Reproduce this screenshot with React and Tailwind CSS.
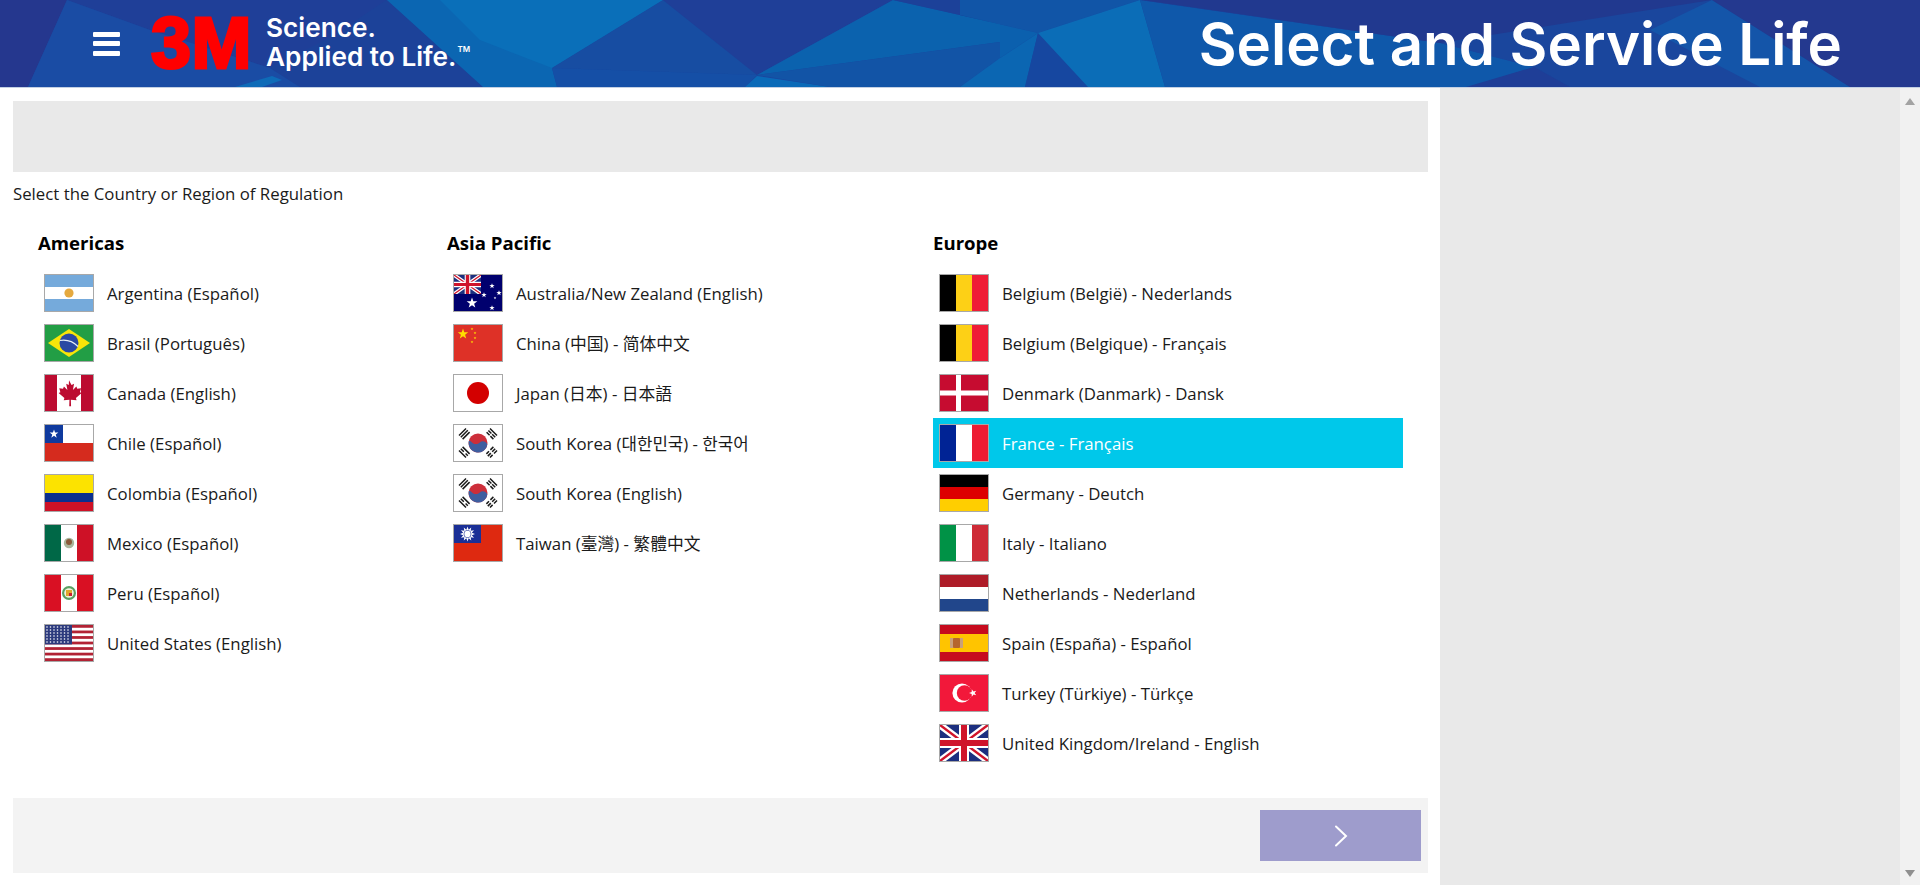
import React from "react";

const BODY_FONT = "font-['Open_Sans','Noto_Sans_CJK_SC','Noto_Sans_CJK_KR',sans-serif]";

// points for a star with n tips
const star = (cx, cy, r, n = 5, inner = 0.4) => {
  const pts = [];
  for (let i = 0; i < n * 2; i++) {
    const rad = i % 2 === 0 ? r : r * inner;
    const a = -Math.PI / 2 + (i * Math.PI) / n;
    pts.push(`${(cx + rad * Math.cos(a)).toFixed(2)},${(cy + rad * Math.sin(a)).toFixed(2)}`);
  }
  return pts.join(" ");
};

const VBands = ({ c }) => (
  <>
    <rect x="0" width="16" height="36" fill={c[0]} />
    <rect x="16" width="16" height="36" fill={c[1]} />
    <rect x="32" width="16" height="36" fill={c[2]} />
  </>
);

const HBands = ({ c }) => (
  <>
    <rect y="0" width="48" height="12" fill={c[0]} />
    <rect y="12" width="48" height="12" fill={c[1]} />
    <rect y="24" width="48" height="12" fill={c[2]} />
  </>
);

const Korea = () => (
  <>
    <rect width="48" height="36" fill="#fff" />
    <circle cx="24" cy="18" r="9.5" fill="#cd2e3a" />
    <path d="M14.6 16.6a9.5 9.5 0 0 0 18.8 2.8c-1.6-3.4-5.4-4-7.6-1.9-2.4 2.3-6 1.9-7.6.2-1.3-1.3-2.6-2.2-3.6-1.1z" fill="#3e5ea0" />
    <g stroke="#1a1a1a" strokeWidth="1.5">
      <path d="M5 10.5l7-7M6.8 12.3l7-7M8.6 14.1l7-7" />
      <path d="M43 10.5l-7-7M41.2 12.3l-3-3M37.4 8.5l-3-3M39.4 14.1l-3-3M35.6 10.3l-3-3" />
      <path d="M5 25.5l7 7M6.8 23.7l3 3M11.6 28.5l2.2 2.2M8.6 21.9l7 7" />
      <path d="M43 25.5l-3 3M38.6 29.9l-2.6 2.6M41.2 23.7l-3 3M36.8 28.1l-3 3M39.4 21.9l-3 3M35 26.3l-2.6 2.6" />
    </g>
  </>
);

const UnionJack = ({ w = 48, h = 36 }) => (
  <svg x="0" y="0" width={w} height={h} viewBox="0 0 48 36" preserveAspectRatio="none">
    <rect width="48" height="36" fill="#1c2f7f" />
    <path d="M0 0L48 36M48 0L0 36" stroke="#fff" strokeWidth="7" />
    <path d="M0 0L48 36M48 0L0 36" stroke="#cf142b" strokeWidth="2.4" />
    <path d="M24 0V36M0 18H48" stroke="#fff" strokeWidth="10" />
    <path d="M24 0V36M0 18H48" stroke="#cf142b" strokeWidth="6" />
  </svg>
);

const flags = {
  ar: (
    <>
      <HBands c={["#75aadb", "#fff", "#75aadb"]} />
      <circle cx="24" cy="18" r="4.6" fill="#e5a93f" />
    </>
  ),
  br: (
    <>
      <rect width="48" height="36" fill="#229e45" />
      <polygon points="24,4 45,18 24,32 3,18" fill="#f8e509" />
      <circle cx="24" cy="18" r="9.5" fill="#2b49a3" />
      <path d="M15 15.5c6-1 13 1 18 6" stroke="#e8eef5" strokeWidth="1.2" fill="none" />
    </>
  ),
  ca: (
    <>
      <rect width="48" height="36" fill="#fff" />
      <rect width="12" height="36" fill="#bc0b30" />
      <rect x="36" width="12" height="36" fill="#bc0b30" />
      <path
        transform="translate(24 18) scale(1.15) translate(-24 -18)"
        d="M24 7l2.2 4 2.2-1-1 5.4 3-3 .8 1.900 3.300-.5-1 3.500 1.500.8-5 4.300.6 2-5-.6.2 5.700h-1.600l.2-5.700-5 .6.600-2-5-4.300 1.500-.8-1-3.500 3.300.5.800-1.900 3 3-1-5.400 2.200 1z"
        fill="#bc0b30"
      />
    </>
  ),
  cl: (
    <>
      <rect width="48" height="18" fill="#fff" />
      <rect y="18" width="48" height="18" fill="#d52b1e" />
      <rect width="18" height="18" fill="#0f3a9e" />
      <polygon points={star(9, 9, 4.6)} fill="#fff" />
    </>
  ),
  co: (
    <>
      <rect width="48" height="18" fill="#fce300" />
      <rect y="18" width="48" height="9" fill="#0a2f8f" />
      <rect y="27" width="48" height="9" fill="#ce1126" />
    </>
  ),
  mx: (
    <>
      <VBands c={["#006847", "#fff", "#ce1126"]} />
      <circle cx="24" cy="18" r="5.2" fill="#a9b59c" />
      <circle cx="24" cy="17" r="3" fill="#8a5a3a" />
    </>
  ),
  pe: (
    <>
      <VBands c={["#d91023", "#fff", "#d91023"]} />
      <circle cx="24" cy="18" r="7" fill="#5aa062" />
      <circle cx="24" cy="18" r="4.8" fill="#f4f1dc" />
      <rect x="21" y="15" width="6" height="6" fill="#e0a82e" />
      <rect x="24" y="18" width="3" height="3" fill="#c8202f" />
    </>
  ),
  us: (
    <>
      <rect width="48" height="36" fill="#fff" />
      {[0, 2, 4, 6, 8, 10, 12].map((i) => (
        <rect key={i} y={(i * 36) / 13} width="48" height={36 / 13} fill="#b22234" />
      ))}
      <rect width="27" height="19.4" fill="#2c3a7d" />
      {[2, 5, 8, 11, 14, 17].map((y) =>
        [2, 5.5, 9, 12.5, 16, 19.5, 23].map((x) => (
          <circle key={`${x}-${y}`} cx={x} cy={y} r="0.8" fill="#fff" />
        ))
      )}
    </>
  ),
  au: (
    <>
      <rect width="48" height="36" fill="#00006e" />
      <UnionJack w={27} h={19} />
      <polygon points={star(18, 28, 5.6)} fill="#fff" />
      <polygon points={star(38, 11, 2.8)} fill="#fff" />
      <polygon points={star(30, 20, 2.8)} fill="#fff" />
      <polygon points={star(45, 18, 2.8)} fill="#fff" />
      <polygon points={star(38, 33, 2.8)} fill="#fff" />
      <polygon points={star(41, 23, 1.4)} fill="#fff" />
    </>
  ),
  cn: (
    <>
      <rect width="48" height="36" fill="#de3127" />
      <polygon points={star(9, 9, 5.5)} fill="#ffde00" />
      <polygon points={star(18, 4, 1.5)} fill="#ffde00" />
      <polygon points={star(21, 8, 1.5)} fill="#ffde00" />
      <polygon points={star(21, 13, 1.5)} fill="#ffde00" />
      <polygon points={star(18, 17, 1.5)} fill="#ffde00" />
    </>
  ),
  jp: (
    <>
      <rect width="48" height="36" fill="#fff" />
      <circle cx="24" cy="18" r="11" fill="#d30000" />
    </>
  ),
  kr: <Korea />,
  tw: (
    <>
      <rect width="48" height="36" fill="#de2910" />
      <rect width="27" height="18" fill="#1a2f96" />
      <polygon points={star(13.5, 9, 7.5, 12, 0.6)} fill="#fff" />
      <circle cx="13.5" cy="9" r="3.8" fill="#1a2f96" />
      <circle cx="13.5" cy="9" r="3.2" fill="#fff" />
    </>
  ),
  be: <VBands c={["#000", "#fdd016", "#ef1c36"]} />,
  dk: (
    <>
      <rect width="48" height="36" fill="#c60c30" />
      <rect x="16" width="5" height="36" fill="#fff" />
      <rect y="15.5" width="48" height="5" fill="#fff" />
    </>
  ),
  fr: <VBands c={["#002395", "#fff", "#ed1c33"]} />,
  de: <HBands c={["#000", "#dd0000", "#ffce00"]} />,
  it: <VBands c={["#009246", "#fff", "#ce2b37"]} />,
  nl: <HBands c={["#ae1c28", "#fff", "#21468b"]} />,
  es: (
    <>
      <rect width="48" height="36" fill="#c60b1e" />
      <rect y="9" width="48" height="18" fill="#ffc400" />
      <rect x="10" y="13" width="3" height="10" fill="#c9a07a" />
      <rect x="20" y="13" width="3" height="10" fill="#c9a07a" />
      <rect x="13" y="13" width="7" height="10" rx="1" fill="#b5652e" />
    </>
  ),
  tr: (
    <>
      <rect width="48" height="36" fill="#f2183a" />
      <circle cx="22" cy="18" r="9.6" fill="#fff" />
      <circle cx="24.5" cy="18" r="7.7" fill="#f2183a" />
      <polygon points={star(33, 18, 4)} fill="#fff" transform="rotate(-90 33 18)" />
    </>
  ),
  uk: <UnionJack />,
};

const Flag = ({ code }) => (
  <svg
    viewBox="0 0 48 36"
    preserveAspectRatio="none"
    className="w-[50px] h-[38px] shrink-0 border border-[#a8a8a8]"
  >
    {flags[code]}
  </svg>
);

const regions = [
  {
    name: "Americas",
    items: [
      ["ar", "Argentina (Español)"],
      ["br", "Brasil (Português)"],
      ["ca", "Canada (English)"],
      ["cl", "Chile (Español)"],
      ["co", "Colombia (Español)"],
      ["mx", "Mexico (Español)"],
      ["pe", "Peru (Español)"],
      ["us", "United States (English)"],
    ],
  },
  {
    name: "Asia Pacific",
    items: [
      ["au", "Australia/New Zealand (English)"],
      ["cn", "China (中国) - 简体中文"],
      ["jp", "Japan (日本) - 日本語"],
      ["kr", "South Korea (대한민국) - 한국어"],
      ["kr", "South Korea (English)"],
      ["tw", "Taiwan (臺灣) - 繁體中文"],
    ],
  },
  {
    name: "Europe",
    items: [
      ["be", "Belgium (België) - Nederlands"],
      ["be", "Belgium (Belgique) - Français"],
      ["dk", "Denmark (Danmark) - Dansk"],
      ["fr", "France - Français", true],
      ["de", "Germany - Deutch"],
      ["it", "Italy - Italiano"],
      ["nl", "Netherlands - Nederland"],
      ["es", "Spain (España) - Español"],
      ["tr", "Turkey (Türkiye) - Türkçe"],
      ["uk", "United Kingdom/Ireland - English"],
    ],
  },
];

// faceted blue backdrop of the banner
const HeaderArt = () => (
  <svg className="absolute inset-0 w-full h-full" viewBox="0 0 1920 87" preserveAspectRatio="none">
    <rect width="1920" height="87" fill="#1a479f" />
    <polygon points="0,0 67,0 28,87 0,87" fill="#25378e" />
    <polygon points="67,0 387,0 330,38 270,68 150,30" fill="#1f3f98" />
    <polygon points="67,0 150,30 270,68 300,87 28,87" fill="#1a4ca4" />
    <polygon points="235,87 272,76 282,80 262,87" fill="#0e6bb8" />
    <polygon points="270,68 330,38 387,0 483,87 300,87" fill="#1c4299" />
    <polygon points="387,0 663,0 552,68 557,87 483,87" fill="#0b66b2" />
    <polygon points="440,0 663,0 552,68 480,40" fill="#0a6fb9" />
    <polygon points="663,0 552,68 757,75" fill="#174da2" />
    <polygon points="663,0 893,0 757,75" fill="#1f3f98" />
    <polygon points="552,68 757,75 745,87 557,87" fill="#154fa6" />
    <polygon points="757,76 830,87 745,87" fill="#0a6ab8" />
    <polygon points="893,0 1000,24 1000,42 757,75" fill="#0b62ae" />
    <polygon points="757,75 1000,42 1000,58 960,87 830,87" fill="#1254a6" />
    <polygon points="1000,58 1038,33 1025,87 960,87" fill="#0b66b2" />
    <polygon points="893,0 1000,0 1000,24" fill="#1c4199" />
    <polygon points="960,0 1140,0 1038,33 960,15" fill="#1155a7" />
    <polygon points="960,15 1038,33 1000,58 1000,24" fill="#0b60ae" />
    <polygon points="1038,33 1088,87 1025,87" fill="#1647a0" />
    <polygon points="1038,33 1140,0 1165,87 1088,87" fill="#0b6db7" />
    <polygon points="1140,0 1440,43 1534,67 1470,87 1165,87" fill="#0f58aa" />
    <polygon points="1140,0 1712,0 1850,87 1570,87 1534,67 1440,43" fill="#1a469d" />
    <polygon points="1142,0 1712,0 1440,43" fill="#21398f" />
    <polygon points="1466,87 1534,67 1570,87" fill="#1f3e97" />
    <polygon points="1712,0 1850,87 1760,87 1650,30" fill="#1455a9" />
    <polygon points="1712,0 1920,0 1920,87 1850,87" fill="#24398f" />
  </svg>
);

export default function App() {
  return (
    <div className={`h-[885px] w-full overflow-hidden flex flex-col bg-white ${BODY_FONT}`}>
      <header className="relative h-[88px] shrink-0 border-b border-[#c3d0e3] overflow-hidden">
        <HeaderArt />
        <div className="relative flex items-center h-full pl-[93px] pr-[78px]">
          <div className="w-[27px] flex flex-col gap-[4.5px]">
            <span className="h-[5px] bg-white rounded-[1px]" />
            <span className="h-[5px] bg-white rounded-[1px]" />
            <span className="h-[5px] bg-white rounded-[1px]" />
          </div>
          <span className="ml-[31px] w-[101px] -mt-[2px] font-['Liberation_Sans',sans-serif] font-bold text-[72px] leading-none tracking-[0.5px] text-[#ff0000] [-webkit-text-stroke:3px_#ff0000]">
            3M
          </span>
          <div className="ml-[14px] -mt-[3px] font-['Inter',sans-serif] font-semibold text-[26.2px] leading-[29px] text-white">
            <div>Science.</div>
            <div className="relative">
              Applied to Life.
              <span className="absolute top-[2px] ml-[1px] text-[8px] leading-[10px]">TM</span>
            </div>
          </div>
          <h1 className="ml-auto mt-[2px] font-['Inter',sans-serif] font-semibold text-[58.2px] leading-none text-white">
            Select and Service Life
          </h1>
        </div>
      </header>

      <div className="flex flex-1 min-h-0">
        <main className="w-[1440px] shrink-0 pl-[13px] pr-[12px] pt-[13px]">
          <div className="h-[71px] bg-[#e9e9e9]" />
          <p className="mt-[10px] text-[16.8px] leading-[24px] text-[#1a1a1a]">
            Select the Country or Region of Regulation
          </p>

          <div className="mt-[23px] pl-[25px] grid grid-cols-[409px_486px_470px]">
            {regions.map((region) => (
              <section key={region.name}>
                <h2 className="mb-[11px] text-[18.6px] leading-[28px] font-bold text-black">{region.name}</h2>
                {region.items.map(([code, label, selected]) => (
                  <div
                    key={label}
                    className={`h-[50px] pl-[6px] flex items-center gap-[13px] text-[16.8px] ${
                      selected ? "bg-[#00c8ea] text-white" : "text-[#1a1a1a]"
                    }`}
                  >
                    <Flag code={code} />
                    <span className="mt-[1px]">{label}</span>
                  </div>
                ))}
              </section>
            ))}
          </div>

          <div className="mt-[30px] h-[75px] bg-[#f3f3f3] flex items-center justify-end pr-[7px]">
            <button className="w-[161px] h-[51px] bg-[#9e9ccc] flex items-center justify-center">
              <svg width="14" height="24" viewBox="0 0 14 24" fill="none">
                <path d="M2 2.5L12 12 2 21.5" stroke="#fff" strokeWidth="2" strokeLinecap="round" />
              </svg>
            </button>
          </div>
        </main>

        <aside className="flex-1 bg-[#e9e9e9]" />

        <div className="w-5 shrink-0 bg-[#f1f1f1] flex flex-col justify-between items-center pt-[10px] pb-[8px]">
          <svg width="10" height="7" viewBox="0 0 10 7">
            <polygon points="5,0 10,7 0,7" fill="#a3a3a3" />
          </svg>
          <svg width="10" height="7" viewBox="0 0 10 7">
            <polygon points="0,0 10,0 5,7" fill="#8f8f8f" />
          </svg>
        </div>
      </div>
    </div>
  );
}
